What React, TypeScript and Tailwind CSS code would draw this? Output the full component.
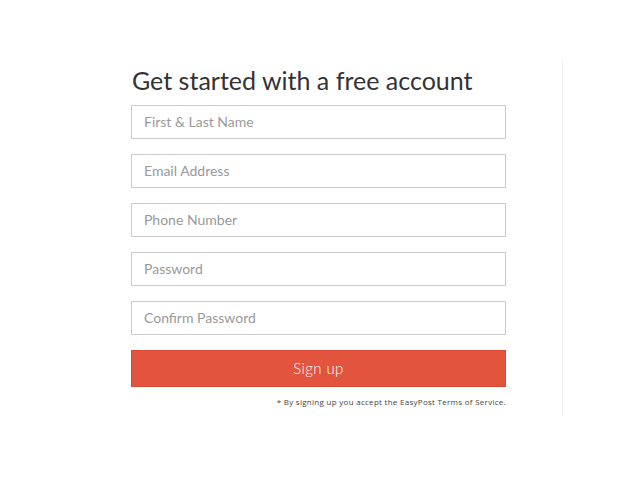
import React from 'react';

const fields = ['First & Last Name', 'Email Address', 'Phone Number', 'Password', 'Confirm Password'];

export default function App() {
  return (
    <div className="w-[640px] h-[480px] bg-white pt-[59px]" style={{ fontFamily: 'Lato, "Open Sans", sans-serif' }}>
      <div className="ml-[131px] w-[432px] h-[357px] border-r border-[#eeeeee]">
        <div className="w-[375px]">
          <h1 className="text-[25px] leading-[30px] pt-[6px] pl-px text-[#333333] font-normal">
            Get started with a free account
          </h1>
          <form className="mt-[10px] flex flex-col gap-[15px]">
            {fields.map((f) => (
              <input
                key={f}
                type={f.includes('Password') ? 'password' : 'text'}
                placeholder={f}
                className="h-[34px] w-full border border-[#cccccc] px-[12px] pb-px text-[14px] text-[#555] placeholder:text-[#999999] outline-none"
              />
            ))}
          </form>
          <button className="mt-[15px] h-[37px] w-full bg-[#e2543e] border border-[#d84a34] text-white text-[15px] font-light tracking-[0.4px]">
            Sign up
          </button>
          <p className="mt-[9px] text-right text-[8px] tracking-[0.28px] text-[#444]" style={{ fontFamily: '"Open Sans", sans-serif' }}>
            * By signing up you accept the EasyPost Terms of Service.
          </p>
        </div>
      </div>
    </div>
  );
}
